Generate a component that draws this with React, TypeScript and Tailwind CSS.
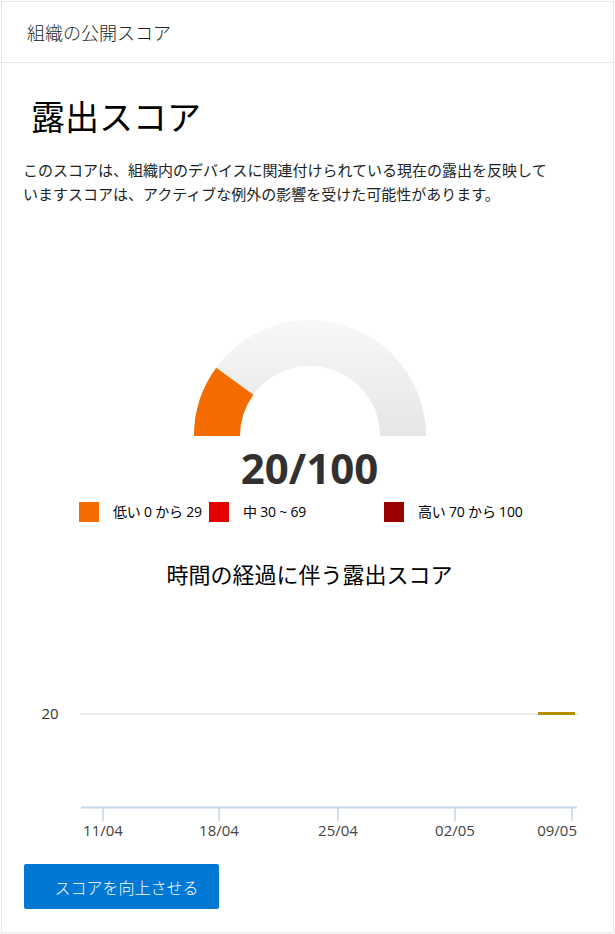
const FONT = { fontFamily: '"Open Sans", "Noto Sans CJK JP", sans-serif' }
const CJK = { fontFamily: '"Noto Sans CJK JP", "Open Sans", sans-serif' }

function Gauge() {
  return (
    <svg width="240" height="118" viewBox="0 0 240 118">
      <defs>
        <linearGradient id="track" x1="0" y1="0" x2="0" y2="1">
          <stop offset="0%" stopColor="#f8f8f8" />
          <stop offset="100%" stopColor="#e6e6e6" />
        </linearGradient>
      </defs>
      <path d="M 4 118 A 116 116 0 0 1 236 118 L 190 118 A 70 70 0 0 0 50 118 Z" fill="url(#track)" />
      <path d="M 4 118 A 116 116 0 0 1 26.15 49.82 L 63.37 76.86 A 70 70 0 0 0 50 118 Z" fill="#f46b00" />
    </svg>
  )
}

function LegendItem({ color, label, width }: { color: string; label: string; width?: string }) {
  return (
    <div className={`flex items-center gap-[14px] ${width ?? ""}`}>
      <div className={`w-5 h-5 shrink-0 ${color}`} />
      <span className="text-[14px] leading-5 text-black whitespace-nowrap tracking-[-0.2px]">{label}</span>
    </div>
  )
}

function TrendChart() {
  const ticks = [
    { x: 101, label: "11/04" },
    { x: 217, label: "18/04" },
    { x: 336, label: "25/04" },
    { x: 453, label: "02/05" },
    { x: 570, label: "09/05" },
  ]
  return (
    <svg width="611" height="250" viewBox="0 0 611 250" style={FONT}>
      <text x="48" y="119" textAnchor="middle" fontSize="15" fill="#323130">20</text>
      <line x1="78" y1="114" x2="576" y2="114" stroke="#ebebeb" strokeWidth="2" />
      <line x1="536" y1="113.5" x2="573" y2="113.5" stroke="#b58e00" strokeWidth="3" />
      <line x1="79" y1="207.5" x2="575" y2="207.5" stroke="#c8d5ee" strokeWidth="2" />
      {ticks.map((t, i) => (
        <g key={t.label}>
          <line x1={t.x} y1="207" x2={t.x} y2="221" stroke="#c8d5ee" strokeWidth="1.5" />
          <text
            x={i === ticks.length - 1 ? 575 : t.x}
            y="236"
            textAnchor={i === ticks.length - 1 ? "end" : "middle"}
            fontSize="15"
            fill="#444"
          >
            {t.label}
          </text>
        </g>
      ))}
    </svg>
  )
}

export default function App() {
  return (
    <div className="w-[615px] h-[934px] bg-white p-px" style={CJK}>
      <div className="h-[932px] border border-[#e6e6e6] flex flex-col">
        {/* header */}
        <div className="h-[61px] border-b border-[#e6e6e6] flex items-center pl-[25px]">
          <span className="text-[18px] leading-6 font-light text-[#201f1e]">組織の公開スコア</span>
        </div>

        {/* body */}
        <div className="flex flex-col">
          <h2 className="mt-[33px] pl-[29px] text-[34px] leading-[40px] text-black font-normal">露出スコア</h2>
          <p className="mt-[22px] pl-[21px] w-[553px] text-[15px] leading-6 text-[#201f1e]">
            このスコアは、組織内のデバイスに関連付けられている現在の露出を反映していますスコアは、アクティブな例外の影響を受けた可能性があります。
          </p>

          <div className="mt-[112px] flex justify-center pl-[4px]">
            <Gauge />
          </div>
          <div className="mt-2 text-center pl-[4px] text-[42px] leading-[48px] font-bold text-[#323130]" style={FONT}>
            20/100
          </div>

          <div className="mt-[10px] flex pl-[77px]" style={FONT}>
            <LegendItem color="bg-[#f46b00]" label="低い 0 から 29" width="w-[130px]" />
            <LegendItem color="bg-[#e50000]" label="中 30 ~ 69" width="w-[175px]" />
            <LegendItem color="bg-[#990000]" label="高い 70 から 100" />
          </div>

          <h3 className="mt-9 text-center pl-[4px] text-[22px] leading-[30px] text-black font-normal">
            時間の経過に伴う露出スコア
          </h3>

          <div className="mt-3">
            <TrendChart />
          </div>

          <div className="mt-[14px] pl-[22px]">
            <button className="w-[195px] h-[45px] rounded-[2px] bg-[#0078d4] text-white text-[16px] font-light pl-[10px]">
              スコアを向上させる
            </button>
          </div>
        </div>
      </div>
    </div>
  )
}
